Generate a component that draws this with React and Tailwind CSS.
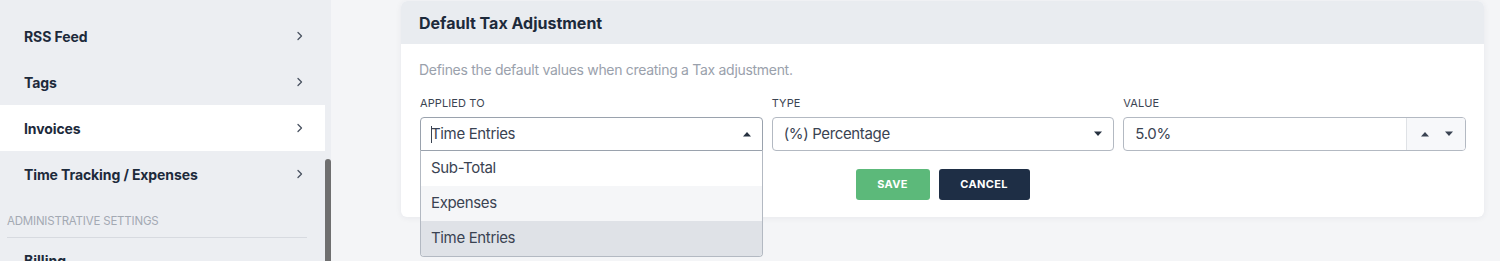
import React from "react";

const font = { fontFamily: "Inter, 'Noto Sans', sans-serif" };

function Chevron() {
  return (
    <svg width="8" height="10" viewBox="0 0 8 10" className="text-[#4a5361]">
      <path d="M2 1.5 L5.5 5 L2 8.5" fill="none" stroke="currentColor" strokeWidth="1.3" strokeLinecap="round" strokeLinejoin="round" />
    </svg>
  );
}

function TriUp({ c = "#263140" }) {
  return (
    <svg width="10" height="6" viewBox="0 0 10 6">
      <path d="M1 5.5 L5 1 L9 5.5 Z" fill={c} />
    </svg>
  );
}
function TriDown({ c = "#263140" }) {
  return (
    <svg width="10" height="6" viewBox="0 0 10 6">
      <path d="M1 0.5 L9 0.5 L5 5 Z" fill={c} />
    </svg>
  );
}

function NavRow({ label, active }) {
  return (
    <div className={`h-[46px] shrink-0 flex items-center justify-between pl-[24px] pr-[21px] ${active ? "bg-white" : ""}`}>
      <span className="text-[14px] font-bold text-[#1d2a3b] tracking-[-0.1px]">{label}</span>
      <Chevron />
    </div>
  );
}

const inputText = "text-[15px] text-[#3a4352] tracking-[-0.35px]";

export default function App() {
  return (
    <div className="w-[1500px] h-[261px] flex overflow-hidden bg-[#f4f5f7]" style={font}>
      {/* Sidebar */}
      <div className="w-[331px] h-full flex bg-[#eceef2] shrink-0 overflow-hidden">
        <div className="w-[325px] flex flex-col pt-[13px]">
          <NavRow label="RSS Feed" />
          <NavRow label="Tags" />
          <NavRow label="Invoices" active />
          <NavRow label="Time Tracking / Expenses" />
          <div className="pl-[7px] pr-[18px] pt-[16px] shrink-0">
            <div className="text-[11.5px] text-[#a3a9b3] tracking-[-0.2px] leading-[16px]">ADMINISTRATIVE SETTINGS</div>
            <div className="h-px bg-[#d7dae0] mt-[8px]" />
          </div>
          <div className="pl-[24px] pt-[12px] text-[14px] font-bold text-[#1d2a3b] shrink-0">Billing</div>
        </div>
        <div className="w-[6px] flex flex-col">
          <div className="mt-[159px] flex-1 bg-[#6f6f70] rounded-t-[3px]" />
        </div>
      </div>

      {/* Main */}
      <div className="flex-1 pl-[70px] pr-[16px] pt-[1px]">
        <div className="w-[1083px] bg-white rounded-[6px] shadow-[0_1px_6px_rgba(30,40,60,0.06)]">
          <div className="h-[43px] bg-[#e9ecf0] rounded-t-[6px] flex items-center px-[18px]">
            <span className="text-[16px] font-bold text-[#1d2a3b]">Default Tax Adjustment</span>
          </div>
          <div className="px-[18px] pt-[16px] pb-[17px]">
            <div className="text-[14px] text-[#9aa1ac] leading-[20px] tracking-[-0.3px]">Defines the default values when creating a Tax adjustment.</div>
            <div className="grid grid-cols-3 gap-x-[9px] mt-[16px] pl-[1px]">
              {/* Applied to */}
              <div className="flex flex-col">
                <div className="text-[11px] text-[#3b4452] leading-[14px] mb-[7px] tracking-[0.01em]">APPLIED TO</div>
                <div className="relative">
                  <div className="h-[34px] border border-[#9aa2ad] rounded-t-[4px] flex items-center justify-between pl-[10px] pr-[10px] bg-white">
                    <span className={`${inputText} flex items-center`}>
                      <span className="w-px h-[17px] bg-[#3a4352] mr-[-1px]" />
                      Time Entries
                    </span>
                    <TriUp />
                  </div>
                  <div className="absolute left-0 right-0 top-[34px] border border-t-0 border-[#b3b9c2] rounded-b-[4px] overflow-hidden z-10 bg-white">
                    <div className={`h-[35px] flex items-center pl-[10px] ${inputText} bg-white`}>Sub-Total</div>
                    <div className={`h-[35px] flex items-center pl-[10px] ${inputText} bg-[#f5f6f8]`}>Expenses</div>
                    <div className={`h-[35px] flex items-center pl-[10px] ${inputText} bg-[#dfe2e7]`}>Time Entries</div>
                  </div>
                </div>
              </div>
              {/* Type */}
              <div className="flex flex-col">
                <div className="text-[11px] text-[#3b4452] leading-[14px] mb-[7px] tracking-[0.01em]">TYPE</div>
                <div className="h-[34px] border border-[#b3b9c2] rounded-[4px] flex items-center justify-between pl-[11px] pr-[10px] bg-white">
                  <span className={inputText}>(%) Percentage</span>
                  <TriDown />
                </div>
              </div>
              {/* Value */}
              <div className="flex flex-col">
                <div className="text-[11px] text-[#3b4452] leading-[14px] mb-[7px] tracking-[0.01em]">VALUE</div>
                <div className="h-[34px] border border-[#b3b9c2] rounded-[4px] flex bg-white overflow-hidden">
                  <div className={`flex-1 flex items-center pl-[11px] ${inputText}`}>5.0%</div>
                  <div className="w-[59px] border-l border-[#dfe2e6] bg-[#f7f8fa] flex items-center justify-between pl-[13px] pr-[11px]">
                    <TriUp c="#3a4352" />
                    <TriDown c="#3a4352" />
                  </div>
                </div>
              </div>
            </div>
            <div className="flex justify-center gap-[9px] mt-[18px]">
              <button className="w-[74px] h-[31px] rounded-[3px] bg-[#5cb97a] text-white text-[11px] font-bold tracking-[0.03em]">SAVE</button>
              <button className="w-[91px] h-[31px] rounded-[3px] bg-[#1e2e45] text-white text-[11px] font-bold tracking-[0.03em]">CANCEL</button>
            </div>
          </div>
        </div>
      </div>
    </div>
  );
}
